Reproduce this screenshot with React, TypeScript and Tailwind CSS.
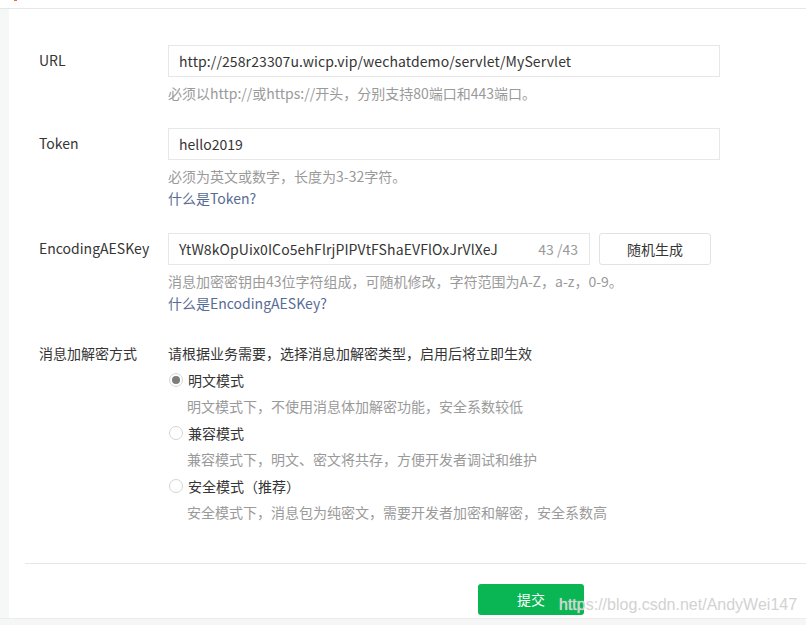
import React from "react";

const FONT = {
  fontFamily: '"Noto Sans CJK SC", "Noto Sans", sans-serif',
};

function Radio({ checked }: { checked?: boolean }) {
  return (
    <span className="w-[14px] h-[14px] rounded-full border border-[#d4d4d4] bg-white flex items-center justify-center shrink-0">
      {checked && <span className="w-[8px] h-[8px] rounded-full bg-[#7d7d7d]" />}
    </span>
  );
}

const modes = [
  { name: "明文模式", desc: "明文模式下，不使用消息体加解密功能，安全系数较低", checked: true },
  { name: "兼容模式", desc: "兼容模式下，明文、密文将共存，方便开发者调试和维护" },
  { name: "安全模式（推荐）", desc: "安全模式下，消息包为纯密文，需要开发者加密和解密，安全系数高" },
];

export default function App() {
  return (
    <div
      className="relative w-[806px] h-[625px] bg-white overflow-hidden flex flex-col text-[14px] text-[#353535]"
      style={FONT}
    >
      {/* top strip */}
      <div className="h-[9px] border-b border-[#e7e7e7] relative shrink-0">
        <span className="absolute left-[14px] top-0 w-[3px] h-[1px] bg-[#f26b3a]" />
      </div>

      <div className="flex flex-1 min-h-0">
        <div className="w-[9px] bg-[#f6f7f7] shrink-0" />
        <div className="flex-1 bg-white">
          <div className="pl-[30px] pt-[36px]">
            {/* URL */}
            <div className="grid grid-cols-[129px_1fr] mb-[24px]">
              <div className="h-[32px] leading-[31px]">URL</div>
              <div>
                <div className="w-[552px] h-[32px] border border-[#e7e7e7] px-[10px] leading-[30px] tracking-[0.1px]">
                  http://258r23307u.wicp.vip/wechatdemo/servlet/MyServlet
                </div>
                <div className="mt-[5px] leading-[22px] text-[#9a9a9a]">
                  必须以http://或https://开头，分别支持80端口和443端口。
                </div>
              </div>
            </div>

            {/* Token */}
            <div className="grid grid-cols-[129px_1fr] mb-[24px]">
              <div className="h-[32px] leading-[31px]">Token</div>
              <div>
                <div className="w-[552px] h-[32px] border border-[#e7e7e7] px-[10px] leading-[30px]">
                  hello2019
                </div>
                <div className="mt-[5px] leading-[22px] text-[#9a9a9a]">
                  必须为英文或数字，长度为3-32字符。
                </div>
                <div className="leading-[22px] text-[#576b95]">什么是Token?</div>
              </div>
            </div>

            {/* EncodingAESKey */}
            <div className="grid grid-cols-[129px_1fr] mb-[26px]">
              <div className="h-[32px] leading-[31px]">EncodingAESKey</div>
              <div>
                <div className="flex items-center gap-[9px]">
                  <div className="w-[422px] h-[32px] border border-[#e7e7e7] pl-[10px] pr-[11px] leading-[30px] flex justify-between">
                    <span className="tracking-[0.1px]">YtW8kOpUix0ICo5ehFlrjPIPVtFShaEVFlOxJrVlXeJ</span>
                    <span className="text-[#9a9a9a]">43 /43</span>
                  </div>
                  <button
                    type="button"
                    className="w-[112px] h-[32px] border border-[#e2e2e2] rounded-[3px] bg-white text-[#353535]"
                  >
                    随机生成
                  </button>
                </div>
                <div className="mt-[5px] leading-[22px] text-[#9a9a9a]">
                  消息加密密钥由43位字符组成，可随机修改，字符范围为A-Z，a-z，0-9。
                </div>
                <div className="leading-[22px] text-[#576b95]">什么是EncodingAESKey?</div>
              </div>
            </div>

            {/* mode */}
            <div className="grid grid-cols-[129px_1fr] leading-[26.5px]">
              <div>消息加解密方式</div>
              <div>
                <div>请根据业务需要，选择消息加解密类型，启用后将立即生效</div>
                {modes.map((m) => (
                  <div key={m.name}>
                    <div className="flex items-center gap-[5px] pl-[1px]">
                      <Radio checked={m.checked} />
                      <span>{m.name}</span>
                    </div>
                    <div className="pl-[19px] text-[#9a9a9a]">{m.desc}</div>
                  </div>
                ))}
              </div>
            </div>
          </div>

          <div className="ml-[16px] mt-[37px] border-t border-[#e7e7e7]" />

          <div className="pl-[469px] pt-[20px]">
            <button
              type="button"
              className="w-[106px] h-[31px] rounded-[3px] bg-[#09b653] text-white text-[14px]"
            >
              提交
            </button>
          </div>
        </div>
      </div>

      {/* bottom strip */}
      <div className="h-[7px] border-t border-[#ececec] bg-[#f6f6f6] shrink-0" />

      {/* watermark */}
      <div
        className="absolute left-[559px] top-[595px] text-[16px] leading-[20px] text-[#d2d2d2]"
        style={{
          fontFamily: '"Liberation Sans", Arial, sans-serif',
          textShadow: "0 0 1px rgba(255,255,255,0.8)",
        }}
      >
        https://blog.csdn.net/AndyWei147
      </div>
    </div>
  );
}
